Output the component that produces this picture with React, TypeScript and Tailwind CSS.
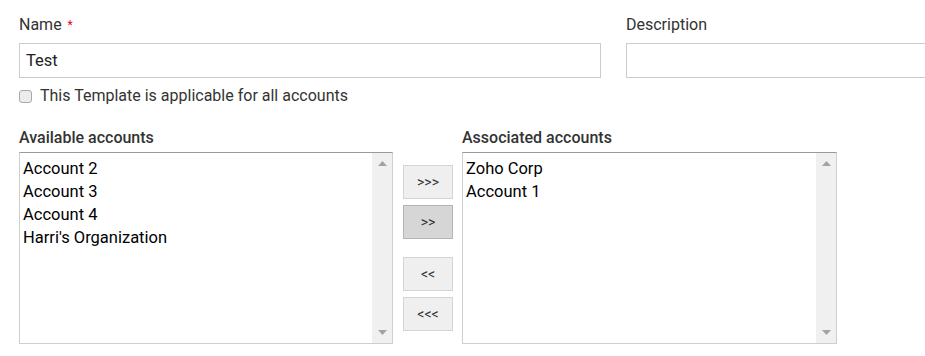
import type { ReactNode } from 'react';

const available = ['Account 2', 'Account 3', 'Account 4', "Harri's Organization"];
const associated = ['Zoho Corp', 'Account 1'];

// ─── Fake listbox scrollbar ───────────────────────────────────────────────────
function ScrollTrack() {
  return (
    <div className="w-[20px] bg-[#f0f0f0] flex flex-col items-center justify-between py-[8px]">
      <svg width="9" height="5" viewBox="0 0 9 5"><path d="M0 5 L4.5 0 L9 5 Z" fill="#a3a3a3" /></svg>
      <svg width="9" height="5" viewBox="0 0 9 5"><path d="M0 0 L4.5 5 L9 0 Z" fill="#a3a3a3" /></svg>
    </div>
  );
}

function ListBox({ items }: { items: string[] }) {
  return (
    <div className="h-[192px] flex border border-[#cfcfcf] border-t-[#9a9a9a] bg-white">
      <ul className="flex-1 pt-[4px] pl-[3px] text-[16.5px] leading-[23px] text-black">
        {items.map(i => <li key={i}>{i}</li>)}
      </ul>
      <ScrollTrack />
    </div>
  );
}

function MoveButton({ children, active }: { children: ReactNode; active?: boolean }) {
  return (
    <button
      className={
        active
          ? 'w-[50px] h-[34px] bg-[#d6d6d6] border border-[#b4b4b4] text-[14px] text-[#333]'
          : 'w-[50px] h-[34px] bg-[#efefef] border border-[#d4d4d4] text-[14px] text-[#333]'
      }
    >
      {children}
    </button>
  );
}

export default function App() {
  return (
    <div className="w-[925px] h-[356px] overflow-hidden bg-white pl-[19px] pt-[14px] text-[#333]" style={{ fontFamily: 'Roboto, "Liberation Sans", sans-serif' }}>
      {/* Name / Description */}
      <div className="flex gap-[25px]">
        <div className="w-[582px] shrink-0">
          <div className="text-[16px] leading-[22px] h-[29px]">
            Name <span className="text-red-600 text-[12px] align-top ml-[2px]">*</span>
          </div>
          <input
            defaultValue="Test"
            className="w-full h-[35px] border border-[#cccccc] px-[6px] text-[16.5px] text-[#222] outline-none"
          />
        </div>
        <div className="w-[320px] shrink-0">
          <div className="text-[16px] leading-[22px] h-[29px]">Description</div>
          <input className="w-full h-[35px] border border-[#cccccc] px-[6px] text-[16px] outline-none" />
        </div>
      </div>

      <label className="flex items-center gap-[8px] mt-[9px] text-[16px] leading-[18px]">
        <span className="w-[13px] h-[13px] rounded-[3px] border border-[#a9a9a9] bg-[#ececec]" />
        This Template is applicable for all accounts
      </label>

      {/* Account pickers */}
      <div className="flex mt-[25px]">
        <div className="w-[374px]">
          <div className="text-[16px] font-medium leading-[16px] h-[22px]">Available accounts</div>
          <ListBox items={available} />
        </div>

        <div className="flex flex-col gap-[6px] ml-[10px] mr-[9px] mt-[35px]">
          <MoveButton>&gt;&gt;&gt;</MoveButton>
          <MoveButton active>&gt;&gt;</MoveButton>
          <div className="h-[6px]" />
          <MoveButton>&lt;&lt;</MoveButton>
          <MoveButton>&lt;&lt;&lt;</MoveButton>
        </div>

        <div className="w-[375px]">
          <div className="text-[16px] font-medium leading-[16px] h-[22px]">Associated accounts</div>
          <ListBox items={associated} />
        </div>
      </div>
    </div>
  );
}
